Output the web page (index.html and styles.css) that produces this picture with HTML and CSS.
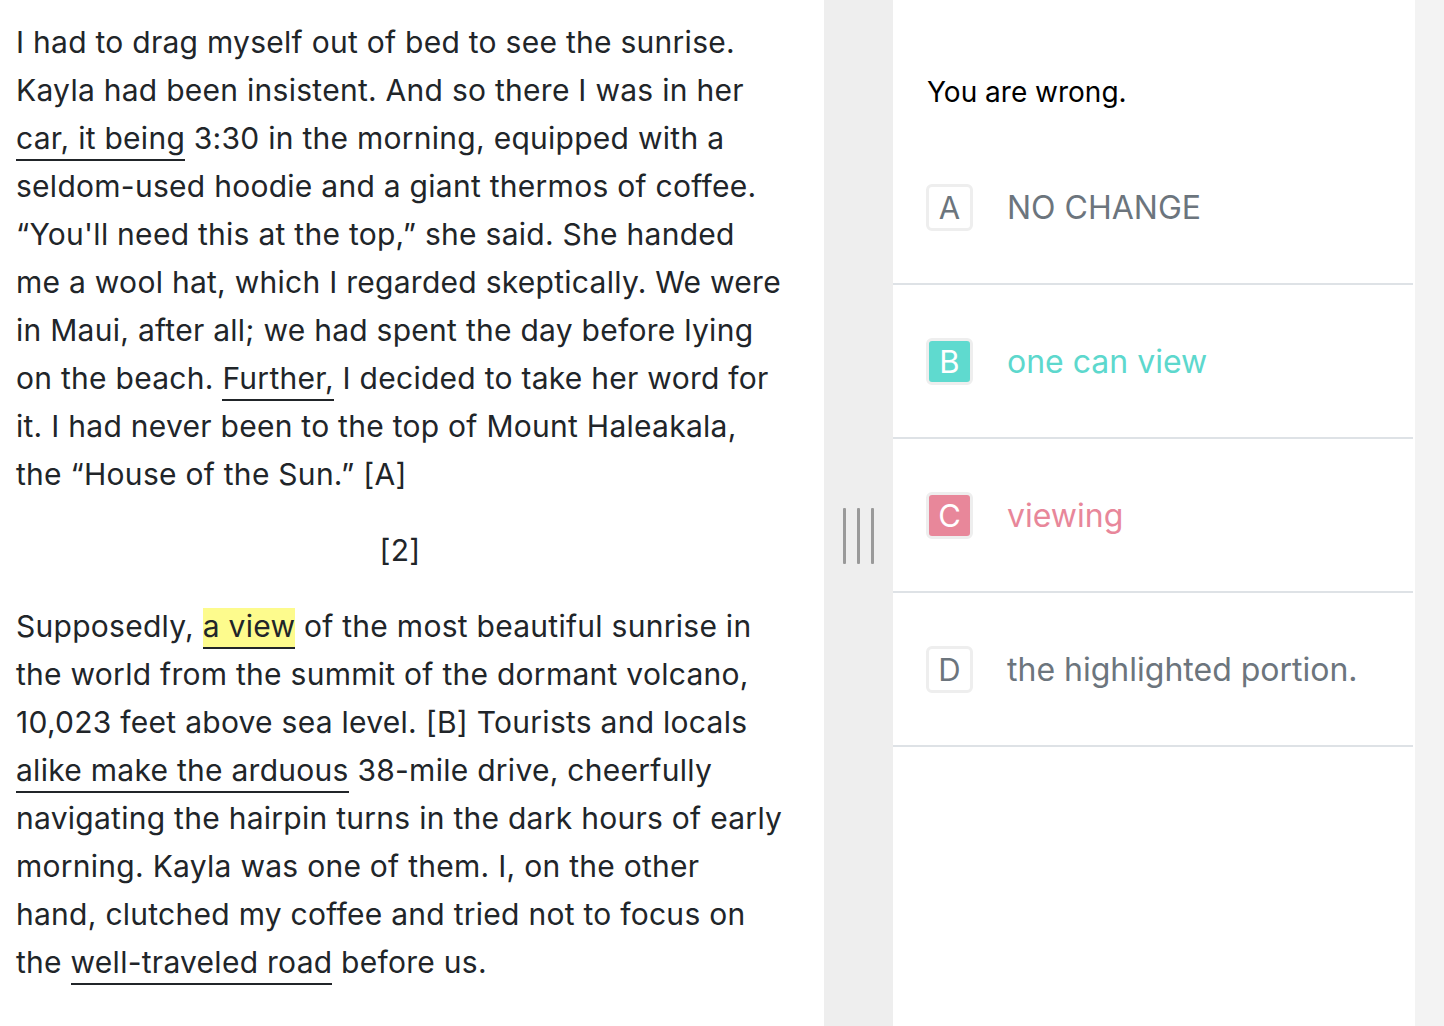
FILE: index.html
```html
<!DOCTYPE html>
<html lang="en">
<head>
<meta charset="utf-8">
<title>Question</title>
<link rel="stylesheet" href="styles.css">
</head>
<body>
<div class="layout">
  <section class="passage">
    <p>I had to drag myself out of bed to see the sunrise. Kayla had been insistent. And so there I was in her <span class="ul">car, it being</span> 3:30 in the morning, equipped with a seldom-used hoodie and a giant thermos of coffee. “You'll need this at the top,” she said. She handed me a wool hat, which I regarded skeptically. We were in Maui, after all; we had spent the day before lying on the beach. <span class="ul">Further,</span> I decided to take her word for it. I had never been to the top of Mount Haleakala, the “House of the Sun.” [A]</p>
    <p class="center">[2]</p>
    <p>Supposedly, <span class="ul hl">a view</span> of the most beautiful sunrise in the world from the summit of the dormant volcano, 10,023 feet above sea level. [B] Tourists and locals <span class="ul">alike make the arduous</span> 38-mile drive, cheerfully navigating the hairpin turns in the dark hours of early morning. Kayla was one of them. I, on the other hand, clutched my coffee and tried not to focus on the <span class="ul">well-traveled road</span> before us.</p>
  </section>
  <div class="gutter">
    <div class="grip"><span></span><span></span><span></span></div>
  </div>
  <section class="panel">
    <div class="prompt">You are wrong.</div>
    <div class="choices">
      <div class="choice">
        <span class="letter">A</span>
        <span class="text">NO CHANGE</span>
      </div>
      <div class="choice correct">
        <span class="letter">B</span>
        <span class="text">one can view</span>
      </div>
      <div class="choice wrong">
        <span class="letter">C</span>
        <span class="text">viewing</span>
      </div>
      <div class="choice">
        <span class="letter">D</span>
        <span class="text">the highlighted portion.</span>
      </div>
    </div>
  </section>
  <div class="strip"></div>
</div>
</body>
</html>
```
FILE: styles.css
```css
html, body {
  margin: 0;
  padding: 0;
  height: 100%;
}
body {
  font-family: Inter, "Noto Sans", "Liberation Sans", sans-serif;
  color: #212529;
  background: #fff;
  overflow: hidden;
}
.layout {
  display: flex;
  height: 1026px;
}
.passage {
  width: 824px;
  box-sizing: border-box;
  padding: 18px 40px 0 16px;
  font-size: 30px;
  letter-spacing: 0.27px;
  line-height: 48px;
  flex: none;
}
.passage p {
  margin: 0 0 28px 0;
}
.passage .center {
  text-align: center;
  padding-right: 0;
}
.ul {
  border-bottom: 2px solid #212529;
  padding-bottom: 3px;
}
.hl {
  background: #fdfb8d;
}
.gutter {
  width: 69px;
  flex: none;
  background: #eeeeee;
  display: flex;
  align-items: center;
  justify-content: center;
  padding-top: 45px;
  box-sizing: border-box;
}
.grip {
  display: flex;
  gap: 11.5px;
  height: 56px;
}
.grip span {
  width: 2.5px;
  background: #9a9a9a;
  border-radius: 1px;
}
.panel {
  width: 522px;
  flex: none;
  background: #fff;
  box-sizing: border-box;
  padding-top: 73px;
}
.prompt {
  font-size: 28px;
  line-height: 38px;
  color: #000;
  padding-left: 34px;
  margin-bottom: 20px;
}
.choices {
  width: 520px;
}
.choice {
  display: flex;
  align-items: center;
  gap: 34px;
  height: 152px;
  padding-left: 33px;
  border-bottom: 2px solid #dee2e6;
  color: #6c757d;
  font-size: 32px;
}
.letter {
  width: 41px;
  height: 41px;
  border: 3px solid #eeeeee;
  border-radius: 6px;
  display: flex;
  align-items: center;
  justify-content: center;
  font-size: 31px;
  flex: none;
}
.correct { color: #5dd8cd; }
.correct .letter { background: #5fdacf; color: #fff; }
.wrong { color: #e8879a; }
.wrong .letter { background: #e8879a; color: #fff; }
.strip {
  flex: 1;
  background: #f3f3f3;
}
```
